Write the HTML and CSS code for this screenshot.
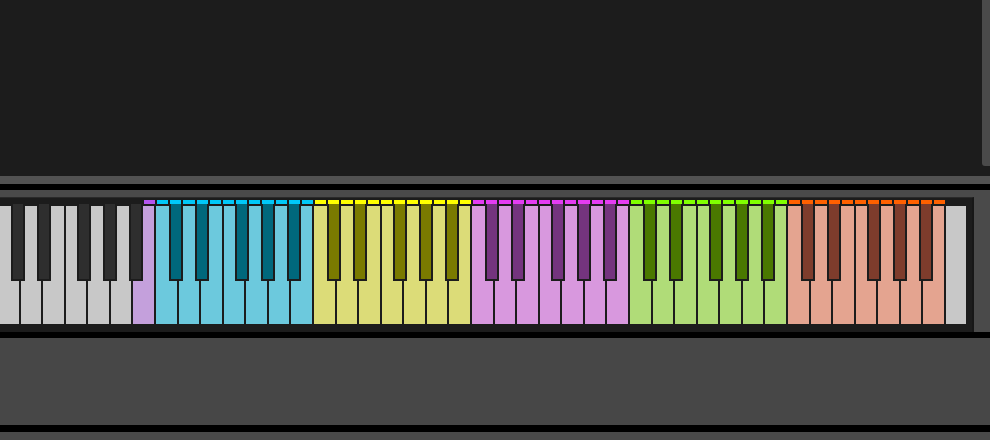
FILE: index.html
```html
<!DOCTYPE html>
<html>
<head>
<meta charset="utf-8">
<link rel="stylesheet" href="styles.css">
</head>
<body>
<div class="top"><div class="scroll"></div></div>
<div class="bar"></div>
<div class="sep"></div>
<div class="kbpanel">
  <div class="frame">
    <div class="keyboard">
      <div class="oct gray">
        <div class="strip"><i class="seg"></i><i class="seg"></i><i class="seg"></i><i class="seg"></i><i class="seg"></i><i class="seg"></i><i class="seg"></i><i class="seg"></i><i class="seg"></i><i class="seg"></i><i class="seg"></i><i class="seg pur"></i></div>
        <div class="whites"><div class="wk"></div><div class="wk"></div><div class="wk"></div><div class="wk"></div><div class="wk"></div><div class="wk"></div><div class="wk pur"></div></div>
        <div class="blacks"><div class="bk c1"></div><div class="bk c2"></div><div class="bk c3"></div><div class="bk c4"></div><div class="bk c5"></div></div>
      </div>
      <div class="oct cyan">
        <div class="strip"><i class="seg"></i><i class="seg"></i><i class="seg"></i><i class="seg"></i><i class="seg"></i><i class="seg"></i><i class="seg"></i><i class="seg"></i><i class="seg"></i><i class="seg"></i><i class="seg"></i><i class="seg"></i></div>
        <div class="whites"><div class="wk"></div><div class="wk"></div><div class="wk"></div><div class="wk"></div><div class="wk"></div><div class="wk"></div><div class="wk"></div></div>
        <div class="blacks"><div class="bk c1"></div><div class="bk c2"></div><div class="bk c3"></div><div class="bk c4"></div><div class="bk c5"></div></div>
      </div>
      <div class="oct yellow">
        <div class="strip"><i class="seg"></i><i class="seg"></i><i class="seg"></i><i class="seg"></i><i class="seg"></i><i class="seg"></i><i class="seg"></i><i class="seg"></i><i class="seg"></i><i class="seg"></i><i class="seg"></i><i class="seg"></i></div>
        <div class="whites"><div class="wk"></div><div class="wk"></div><div class="wk"></div><div class="wk"></div><div class="wk"></div><div class="wk"></div><div class="wk"></div></div>
        <div class="blacks"><div class="bk c1"></div><div class="bk c2"></div><div class="bk c3"></div><div class="bk c4"></div><div class="bk c5"></div></div>
      </div>
      <div class="oct magenta">
        <div class="strip"><i class="seg"></i><i class="seg"></i><i class="seg"></i><i class="seg"></i><i class="seg"></i><i class="seg"></i><i class="seg"></i><i class="seg"></i><i class="seg"></i><i class="seg"></i><i class="seg"></i><i class="seg"></i></div>
        <div class="whites"><div class="wk"></div><div class="wk"></div><div class="wk"></div><div class="wk"></div><div class="wk"></div><div class="wk"></div><div class="wk"></div></div>
        <div class="blacks"><div class="bk c1"></div><div class="bk c2"></div><div class="bk c3"></div><div class="bk c4"></div><div class="bk c5"></div></div>
      </div>
      <div class="oct green">
        <div class="strip"><i class="seg"></i><i class="seg"></i><i class="seg"></i><i class="seg"></i><i class="seg"></i><i class="seg"></i><i class="seg"></i><i class="seg"></i><i class="seg"></i><i class="seg"></i><i class="seg"></i><i class="seg"></i></div>
        <div class="whites"><div class="wk"></div><div class="wk"></div><div class="wk"></div><div class="wk"></div><div class="wk"></div><div class="wk"></div><div class="wk"></div></div>
        <div class="blacks"><div class="bk c1"></div><div class="bk c2"></div><div class="bk c3"></div><div class="bk c4"></div><div class="bk c5"></div></div>
      </div>
      <div class="oct orange">
        <div class="strip"><i class="seg"></i><i class="seg"></i><i class="seg"></i><i class="seg"></i><i class="seg"></i><i class="seg"></i><i class="seg"></i><i class="seg"></i><i class="seg"></i><i class="seg"></i><i class="seg"></i><i class="seg"></i></div>
        <div class="whites"><div class="wk"></div><div class="wk"></div><div class="wk"></div><div class="wk"></div><div class="wk"></div><div class="wk"></div><div class="wk"></div></div>
        <div class="blacks"><div class="bk c1"></div><div class="bk c2"></div><div class="bk c3"></div><div class="bk c4"></div><div class="bk c5"></div></div>
      </div>
      <div class="last gray">
        <div class="strip"></div>
        <div class="whites"><div class="wk"></div></div>
      </div>
    </div>
  </div>
</div>
<div class="sep"></div>
<div class="lower"></div>
<div class="sep thick"></div>
<div class="footer"></div>
</body>
</html>
```

FILE: styles.css
```css
html, body {
  margin: 0;
  padding: 0;
}
body {
  width: 990px;
  height: 440px;
  overflow: hidden;
  background: #1c1c1c;
  display: flex;
  flex-direction: column;
}
.top {
  height: 176px;
  flex-shrink: 0;
  background: #1c1c1c;
  display: flex;
  justify-content: flex-end;
  align-items: flex-start;
}
.scroll {
  width: 8px;
  height: 166px;
  background: #4a4a4a;
  border-bottom-left-radius: 3px;
}
.bar {
  height: 8px;
  flex-shrink: 0;
  background: #525252;
}
.sep {
  height: 6px;
  flex-shrink: 0;
  background: #000;
}
.sep.thick {
  height: 7px;
}
.kbpanel {
  height: 142px;
  flex-shrink: 0;
  background: #4a4a4a;
  display: flex;
  padding: 7px 16px 0 0;
  box-sizing: border-box;
}
.frame {
  flex: 1;
  background: #1c1c1c;
  border-top: 1px solid #2a2a2a;
  border-right: 2px solid #171717;
  padding-top: 2px;
  overflow: hidden;
  position: relative;
}
.keyboard {
  display: flex;
  margin-left: -2px;
}
.oct, .last {
  position: relative;
  flex-shrink: 0;
  display: flex;
  flex-direction: column;
  gap: 2px;
}
.oct { width: 158px; }
.last { width: 20px; }
.strip {
  height: 4px;
  display: grid;
  grid-template-columns: repeat(12, 1fr);
}
.seg {
  display: block;
  margin: 0 1px;
  background: var(--strip);
}
.whites {
  height: 118px;
  display: flex;
}
.wk {
  flex: 1;
  background: var(--white);
  border-right: 2px solid #1c1c1c;
}
.last .wk { border-right: 0; }
.blacks {
  position: absolute;
  top: 4px;
  left: 0;
  right: 0;
  height: 77px;
  display: grid;
  grid-template-columns: repeat(12, 1fr);
}
.bk {
  background: var(--black);
  border: 2px solid #1c1c1c;
  border-top: 0;
  margin: 0 -0.5px;
}
.c1 { grid-column: 2; }
.c2 { grid-column: 4; }
.c3 { grid-column: 7; }
.c4 { grid-column: 9; }
.c5 { grid-column: 11; }

.gray { --white: #c8c8c8; --black: #2e2e2e; --strip: transparent; }
.gray .pur { --white: #c4a0dc; --strip: #b455ee; }
.cyan { --white: #6cc9dd; --black: #00687c; --strip: #00c8f8; }
.yellow { --white: #dcdc78; --black: #7a7a00; --strip: #ffff00; }
.magenta { --white: #d898de; --black: #74347e; --strip: #e43cf2; }
.green { --white: #b0dc78; --black: #4a7800; --strip: #80ff00; }
.orange { --white: #e4a490; --black: #7e3c2c; --strip: #ff6000; }

.lower {
  height: 87px;
  flex-shrink: 0;
  background: #474747;
}
.footer {
  height: 8px;
  flex-shrink: 0;
  background: #4a4a4a;
}
```
